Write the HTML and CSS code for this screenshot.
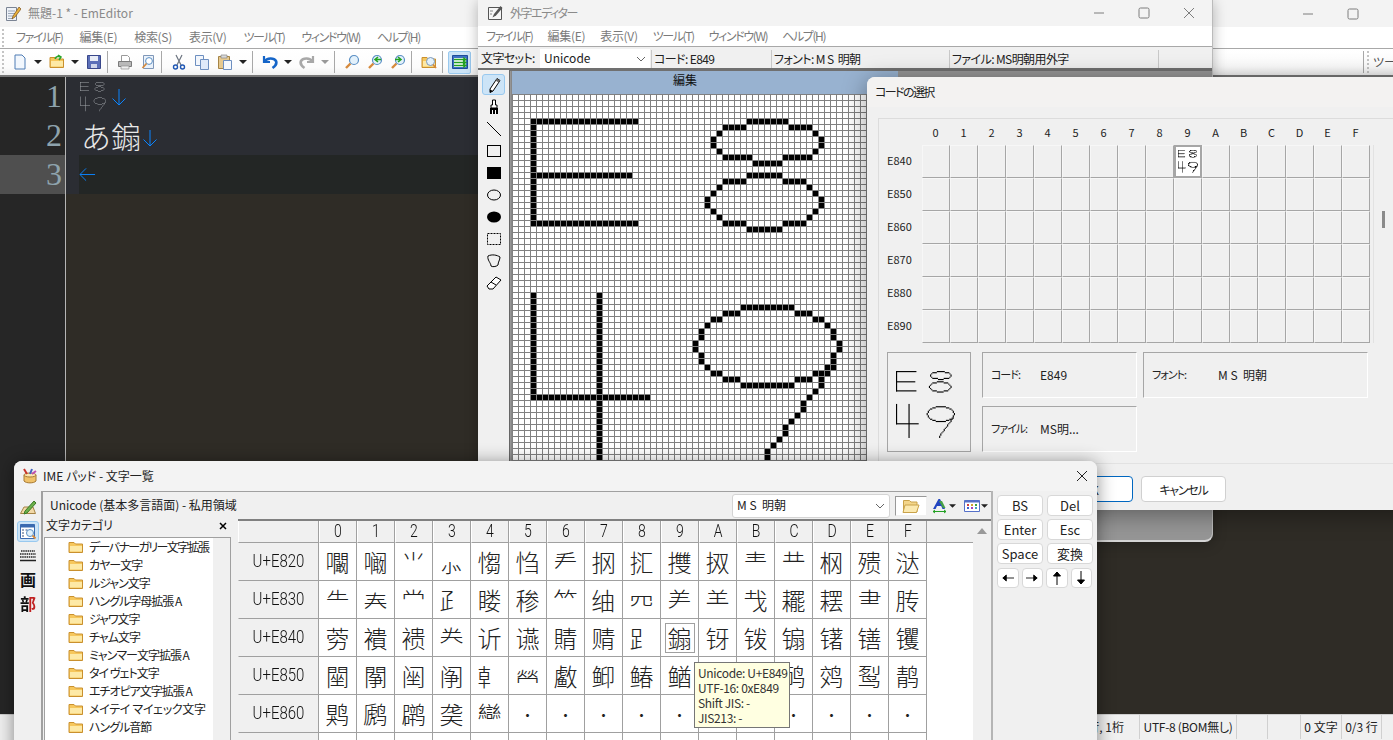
FILE: index.html
```html
<!DOCTYPE html>
<html lang="ja">
<head>
<meta charset="utf-8">
<title>EmEditor / 外字エディター / IME パッド</title>
<link rel="stylesheet" href="styles.css">
</head>
<body>
<svg class="defs" aria-hidden="true">
  <symbol id="g" viewBox="0 0 52 59">
    <rect x="0" y="0" width="18" height="1"/><rect x="0" y="0" width="1" height="18"/><rect x="0" y="9" width="17" height="1"/><rect x="0" y="17" width="18" height="1"/>
    <rect x="36" y="0" width="7" height="1"/><rect x="32" y="1" width="4" height="1"/><rect x="43" y="1" width="4" height="1"/><rect x="31" y="2" width="1" height="1"/><rect x="47" y="2" width="1" height="1"/><rect x="30" y="3" width="1" height="2"/><rect x="48" y="3" width="1" height="2"/><rect x="31" y="5" width="1" height="1"/><rect x="47" y="5" width="1" height="1"/><rect x="32" y="6" width="5" height="1"/><rect x="42" y="6" width="5" height="1"/><rect x="37" y="7" width="5" height="1"/><rect x="36" y="9" width="6" height="1"/><rect x="32" y="10" width="4" height="1"/><rect x="42" y="10" width="4" height="1"/><rect x="31" y="11" width="1" height="1"/><rect x="46" y="11" width="1" height="1"/><rect x="30" y="12" width="1" height="1"/><rect x="47" y="12" width="1" height="1"/><rect x="29" y="13" width="1" height="2"/><rect x="48" y="13" width="1" height="2"/><rect x="30" y="15" width="1" height="1"/><rect x="47" y="15" width="1" height="1"/><rect x="31" y="16" width="1" height="1"/><rect x="46" y="16" width="1" height="1"/><rect x="32" y="17" width="4" height="1"/><rect x="42" y="17" width="4" height="1"/><rect x="36" y="18" width="6" height="1"/>
    <rect x="0" y="29" width="1" height="18"/><rect x="0" y="46" width="20" height="1"/><rect x="11" y="29" width="1" height="30"/>
    <rect x="35" y="31" width="9" height="1"/><rect x="32" y="32" width="3" height="1"/><rect x="44" y="32" width="3" height="1"/><rect x="30" y="33" width="2" height="1"/><rect x="47" y="33" width="2" height="1"/><rect x="29" y="34" width="1" height="1"/><rect x="49" y="34" width="1" height="1"/><rect x="28" y="35" width="1" height="2"/><rect x="50" y="35" width="1" height="2"/><rect x="27" y="37" width="1" height="2"/><rect x="51" y="37" width="1" height="2"/><rect x="28" y="39" width="1" height="2"/><rect x="50" y="39" width="1" height="2"/><rect x="29" y="41" width="1" height="1"/><rect x="49" y="41" width="2" height="1"/><rect x="30" y="42" width="2" height="1"/><rect x="47" y="42" width="3" height="1"/><rect x="32" y="43" width="3" height="1"/><rect x="44" y="43" width="3" height="1"/><rect x="48" y="43" width="1" height="2"/><rect x="35" y="44" width="9" height="1"/><rect x="47" y="45" width="1" height="1"/><rect x="46" y="46" width="1" height="1"/><rect x="45" y="47" width="1" height="2"/><rect x="44" y="49" width="1" height="1"/><rect x="43" y="50" width="1" height="1"/><rect x="42" y="51" width="1" height="2"/><rect x="41" y="53" width="1" height="1"/><rect x="40" y="54" width="1" height="1"/><rect x="39" y="55" width="1" height="2"/><rect x="38" y="57" width="1" height="2"/>
  </symbol>
  <symbol id="caret" viewBox="0 0 8 4"><path d="M0 0h8L4 4z"/></symbol>
  <symbol id="folder" viewBox="0 0 16 16"><path d="M1 3.500h5l1.500 1.500h7v8.500H1z" fill="#f6c75c" stroke="#c9902e"/><path d="M2 7h12v5.500H2z" fill="#fde9a6"/></symbol>
  <symbol id="lens" viewBox="0 0 16 16"><path d="M6.500 9.500 2 14" stroke="#d68a3c" stroke-width="2.400" fill="none"/><circle cx="10" cy="6" r="4.500" fill="#e3f1fb" stroke="#5a8fc4" stroke-width="1.200"/></symbol>
  <symbol id="lensg" viewBox="0 0 16 16"><path d="M6.500 9.500 2 14" stroke="#d68a3c" stroke-width="2.400" fill="none"/><circle cx="10" cy="6" r="4.500" fill="#e3f1fb" stroke="#5a8fc4" stroke-width="1.200"/><path d="M5 5.500h6M8 3l3 2.500L8 8" stroke="#23a323" stroke-width="1.600" fill="none"/></symbol>
  <symbol id="lensb" viewBox="0 0 16 16"><path d="M6.500 9.500 2 14" stroke="#d68a3c" stroke-width="2.400" fill="none"/><circle cx="10" cy="6" r="4.500" fill="#e3f1fb" stroke="#5a8fc4" stroke-width="1.200"/><path d="M14 5.500H8M11 3 8 5.500 11 8" stroke="#23a323" stroke-width="1.600" fill="none"/></symbol>
</svg>

<section class="win em">
  <header class="em-title">
    <svg class="ic16" viewBox="0 0 16 16"><path d="M1.500 1.500h10v13h-10z" fill="#eef2f8" stroke="#7b8494"/><path d="M3 5h7M3 7.500h7M3 10h6M3 12.500h5" stroke="#9aa6b8"/><path d="M14 1 8 10l-1 3 3-2 6-8z" fill="#e9b23c" stroke="#7a4f1c" stroke-width=".7"/></svg>
    <span>無題-1 * - EmEditor</span>
    <div class="ctl em-ctl">
      <svg viewBox="0 0 12 12"><path d="M1 6h10"/></svg>
      <svg viewBox="0 0 12 12"><rect x="1" y="1" width="10" height="10" rx="1.500"/></svg>
      <svg viewBox="0 0 12 12"><path d="M1 1l10 10M11 1 1 11"/></svg>
    </div>
  </header>
  <nav class="em-menu">
    <i class="grip"></i>
    <span class="k">ファイル(F)</span><span>編集(E)</span><span>検索(S)</span><span>表示(V)</span><span class="k">ツール(T)</span><span class="k">ウィンドウ(W)</span><span class="k">ヘルプ(H)</span>
  </nav>
  <div class="em-tools">
    <i class="grip"></i>
    <b class="ti"><svg class="ic16" viewBox="0 0 16 16"><path d="M3 1h7l3 3v11H3z" fill="#f2f7fd" stroke="#4f7db5"/></svg></b><b class="dd"><svg><use href="#caret"/></svg></b>
    <b class="ti"><svg class="ic16" viewBox="0 0 16 16"><use href="#folder"/><path d="M6 5c1-3 4-3 5-2M9 1l3 2-2 3" stroke="#2aa52a" stroke-width="1.500" fill="none"/></svg></b><b class="dd"><svg><use href="#caret"/></svg></b>
    <b class="ti"><svg class="ic16" viewBox="0 0 16 16"><path d="M1.500 1.500h13v13h-13z" fill="#5b6fb8" stroke="#39478a"/><path d="M4 2h8v5H4z" fill="#e8ecf6"/><path d="M5 10h6v4H5z" fill="#cfd6ea"/></svg></b>
    <i class="sep"></i>
    <b class="ti"><svg class="ic16" viewBox="0 0 16 16"><path d="M4.500 1.500h6l2 2v4h-8z" fill="#fff" stroke="#9a9a9a"/><path d="M1.500 7.500h13v5h-13z" fill="#b9b9b9" stroke="#7c7c7c"/><path d="M4 12h8v3H4z" fill="#efefef" stroke="#8f8f8f" stroke-width=".7"/></svg></b>
    <b class="ti"><svg class="ic16" viewBox="0 0 16 16"><path d="M3.500 1.500h10v13h-10z" fill="#eaf2fb" stroke="#7f97b8"/><circle cx="9" cy="7" r="3.400" fill="#fff" stroke="#5a8fc4"/><path d="M6.500 9.500 2.500 14" stroke="#d68a3c" stroke-width="1.800"/></svg></b>
    <i class="sep"></i>
    <b class="ti"><svg class="ic16" viewBox="0 0 16 16"><path d="M5 1l5 10M11 1 6 11" stroke="#6d7480" stroke-width="1.200"/><circle cx="4.500" cy="13" r="2" fill="none" stroke="#1e56b3" stroke-width="1.400"/><circle cx="11.500" cy="13" r="2" fill="none" stroke="#1e56b3" stroke-width="1.400"/></svg></b>
    <b class="ti"><svg class="ic16" viewBox="0 0 16 16"><path d="M1.500 1.500h8v10h-8z" fill="#f2f6fc" stroke="#6d8fc0"/><path d="M6.500 5.500h8v10h-8z" fill="#dfeafa" stroke="#6d8fc0"/></svg></b>
    <b class="ti"><svg class="ic16" viewBox="0 0 16 16"><path d="M1.500 2.500h11v12h-11z" fill="#e6c98f" stroke="#a58446"/><path d="M4 1h6v3H4z" fill="#d9d9d9" stroke="#888" stroke-width=".7"/><path d="M6.500 6.500h8v9h-8z" fill="#f4f8fd" stroke="#6d8fc0"/></svg></b><b class="dd"><svg><use href="#caret"/></svg></b>
    <i class="sep"></i>
    <b class="ti"><svg class="ic16" viewBox="0 0 16 16"><path d="M2 2v6h6" fill="none" stroke="#1565c8" stroke-width="2.200"/><path d="M2.500 7.500C5 3.500 12 3.500 14 7c1 2.500-.5 5-3.500 7" fill="none" stroke="#1565c8" stroke-width="2.600"/></svg></b><b class="dd"><svg><use href="#caret"/></svg></b>
    <b class="ti"><svg class="ic16" viewBox="0 0 16 16"><path d="M14 2v6H8" fill="none" stroke="#a8a8a8" stroke-width="2.200"/><path d="M13.500 7.500C11 3.500 4 3.500 2 7c-1 2.500.5 5 3.500 7" fill="none" stroke="#a8a8a8" stroke-width="2.600"/></svg></b><b class="dd dim"><svg><use href="#caret"/></svg></b>
    <i class="sep"></i>
    <b class="ti"><svg class="ic16"><use href="#lens"/></svg></b>
    <b class="ti"><svg class="ic16"><use href="#lensb"/></svg></b>
    <b class="ti"><svg class="ic16"><use href="#lensg"/></svg></b>
    <i class="sep"></i>
    <b class="ti"><svg class="ic16" viewBox="0 0 16 16"><use href="#folder"/><circle cx="9.500" cy="7.500" r="4" fill="#e3f1fb" stroke="#7c98b8"/><path d="M12 10.500l3 3.500" stroke="#d68a3c" stroke-width="1.800"/></svg></b>
    <i class="sep"></i>
    <b class="ti act"><svg class="ic16" viewBox="0 0 16 16"><path d="M.5 1.500h15v13H.5z" fill="#3c70c4" stroke="#1f4c9a"/><path d="M2 4h12v9H2z" fill="#fff"/><path d="M2 5.500h11M2 8.500h11M2 11.500h11M11 3.500l3 2-3 2M11 6.500l3 2-3 2M11 9.500l3 2-3 2" stroke="#22a022" stroke-width="1.300" fill="none"/></svg></b>
    <div class="tb-right"><i class="sep"></i><i class="grip"></i><span>ツール</span></div>
  </div>
  <div class="editor">
    <div class="gutter">
      <div class="ln">1</div>
      <div class="ln">2</div>
      <div class="ln cur">3</div>
    </div>
    <div class="etext">
      <div class="eline">
        <svg class="gly-s"><use href="#g"/></svg>
        <svg class="arr" viewBox="0 0 16 18"><path d="M8 1v16M1.500 10.500 8 17l6.500-6.500"/></svg>
      </div>
      <div class="eline big">
        <span>あ䥇</span>
        <svg class="arr" viewBox="0 0 16 18"><path d="M8 1v16M1.500 10.500 8 17l6.500-6.500"/></svg>
      </div>
      <div class="eline current">
        <div class="curbg"><svg class="arr" viewBox="0 0 18 16"><path d="M17 8H1M7.500 1.500 1 8l6.500 6.500"/></svg></div>
      </div>
    </div>
  </div>
  <footer class="status">
    <div class="st first">3 行, 1桁</div>
    <div class="st w97">UTF-8 (BOM無し)</div>
    <div class="st w31"></div>
    <div class="st w33"></div>
    <div class="st w41">0 文字</div>
    <div class="st w40">0/3 行</div>
  </footer>
</section>

<section class="win gaiji">
  <header class="gj-title">
    <svg class="ic16" viewBox="0 0 16 16"><path d="M1.500 2.500h13v12h-13z" fill="#f6f6f6" stroke="#555"/><path d="M13.500 1 7 9l-1.500 3.500L9 10.500 15.500 3z" fill="#555"/><path d="M3 6h3M3 9h2" stroke="#888"/></svg>
    <span>外字エディター</span>
    <div class="ctl gj-ctl">
      <svg viewBox="0 0 12 12"><path d="M1 6h10"/></svg>
      <svg viewBox="0 0 12 12"><rect x="1" y="1" width="10" height="10" rx="1.500"/></svg>
      <svg viewBox="0 0 12 12"><path d="M1 1l10 10M11 1 1 11"/></svg>
    </div>
  </header>
  <nav class="gj-menu">
    <span class="k">ファイル(F)</span><span>編集(E)</span><span>表示(V)</span><span class="k">ツール(T)</span><span class="k">ウィンドウ(W)</span><span class="k">ヘルプ(H)</span>
  </nav>
  <div class="gj-bar">
    <label>文字セット:</label>
    <div class="gj-combo"><span>Unicode</span><svg viewBox="0 0 10 6"><path d="M1 1l4 4 4-4"/></svg></div>
    <div class="gj-st w122">コード: E849</div>
    <div class="gj-st w178">フォント: M S&nbsp; 明朝</div>
    <div class="gj-st w210">ファイル: MS明朝用外字</div>
  </div>
  <div class="gj-body">
    <aside class="tools">
      <b class="tool on"><svg class="ic16" viewBox="0 0 16 16"><path d="M11 1.500l3 2L7 14l-3 1.500L4 12z" fill="#fff" stroke="#000"/><path d="M11 1.500l3 2-1.500 2-3-2z" fill="#666"/><path d="M4 12.500l3 1.500-3 1.500z" fill="#000"/></svg></b>
      <b class="tool"><svg class="ic16" viewBox="0 0 16 16"><path d="M6.500 1h3v5h1.500v3H5V6h1.500z" fill="#fff" stroke="#000"/><path d="M4 9h8v6H4z" fill="#000"/><path d="M6.500 11v4M9.500 11v4" stroke="#fff"/></svg></b>
      <b class="tool"><svg class="ic16" viewBox="0 0 16 16"><path d="M1 1l14 14" stroke="#000"/></svg></b>
      <b class="tool"><svg class="ic16" viewBox="0 0 16 16"><rect x="1.500" y="2.500" width="13" height="11" fill="none" stroke="#000"/></svg></b>
      <b class="tool"><svg class="ic16" viewBox="0 0 16 16"><rect x="1" y="2" width="14" height="12"/></svg></b>
      <b class="tool"><svg class="ic16" viewBox="0 0 16 16"><ellipse cx="8" cy="8" rx="6.500" ry="5" fill="none" stroke="#000"/></svg></b>
      <b class="tool"><svg class="ic16" viewBox="0 0 16 16"><ellipse cx="8" cy="8" rx="7" ry="5.500"/></svg></b>
      <b class="tool"><svg class="ic16" viewBox="0 0 16 16"><rect x="1.500" y="2.500" width="13" height="11" fill="none" stroke="#000" stroke-dasharray="2 1"/></svg></b>
      <b class="tool"><svg class="ic16" viewBox="0 0 16 16"><path d="M2 3c4-2 9-1 12 1 0 3-2 5-2 8-2 2-6 2-7 1 0-3-4-6-3-10z" fill="none" stroke="#000"/></svg></b>
      <b class="tool"><svg class="ic16" viewBox="0 0 16 16"><path d="M10 2l5 3-8 9H3l-2-3z" fill="#fff" stroke="#000"/><path d="M5 7l5 3" stroke="#000"/></svg></b>
    </aside>
    <div class="mdi">
      <div class="child">
        <div class="child-title">編集</div>
        <div class="grid64"><svg class="gly-e"><use href="#g"/></svg></div>
      </div>
    </div>
  </div>
</section>

<section class="win dialog">
  <header class="dl-title"><span>コードの選択</span><svg class="dl-x" viewBox="0 0 12 12"><path d="M1 1l10 10M11 1 1 11"/></svg></header>
  <div class="group">
    <div class="code-wrap">
      <div class="codes">
        <i></i><em>0</em><em>1</em><em>2</em><em>3</em><em>4</em><em>5</em><em>6</em><em>7</em><em>8</em><em>9</em><em>A</em><em>B</em><em>C</em><em>D</em><em>E</em><em>F</em>
        <strong>E840</strong><u></u><u></u><u></u><u></u><u></u><u></u><u></u><u></u><u></u><u class="sel"><svg class="gly-c"><use href="#g"/></svg></u><u></u><u></u><u></u><u></u><u></u><u></u>
        <strong>E850</strong><u></u><u></u><u></u><u></u><u></u><u></u><u></u><u></u><u></u><u></u><u></u><u></u><u></u><u></u><u></u><u></u>
        <strong>E860</strong><u></u><u></u><u></u><u></u><u></u><u></u><u></u><u></u><u></u><u></u><u></u><u></u><u></u><u></u><u></u><u></u>
        <strong>E870</strong><u></u><u></u><u></u><u></u><u></u><u></u><u></u><u></u><u></u><u></u><u></u><u></u><u></u><u></u><u></u><u></u>
        <strong>E880</strong><u></u><u></u><u></u><u></u><u></u><u></u><u></u><u></u><u></u><u></u><u></u><u></u><u></u><u></u><u></u><u></u>
        <strong>E890</strong><u></u><u></u><u></u><u></u><u></u><u></u><u></u><u></u><u></u><u></u><u></u><u></u><u></u><u></u><u></u><u></u>
      </div>
      <div class="code-scroll"><i></i></div>
    </div>
    <div class="detail">
      <div class="preview"><svg class="gly-p"><use href="#g"/></svg></div>
      <div class="info">
        <div class="ibox w155"><span>コード:</span><span>E849</span></div>
        <div class="ibox w225"><span>フォント:</span><span>M S&nbsp; 明朝</span></div>
        <div class="ibox w155"><span>ファイル:</span><span>MS明...</span></div>
      </div>
    </div>
  </div>
  <footer class="dl-foot">
    <button class="btn def">OK</button>
    <button class="btn">キャンセル</button>
  </footer>
</section>

<section class="win ime">
  <header class="ime-title">
    <svg class="ic16" viewBox="0 0 16 16"><path d="M2 7h12v6c-2 2.500-10 2.500-12 0z" fill="#f0c26a" stroke="#a87a34"/><ellipse cx="8" cy="7" rx="6" ry="2" fill="#fbe6b0" stroke="#a87a34"/><path d="M5 6 2 1" stroke="#c9342b" stroke-width="2"/><path d="M8 6l2-5" stroke="#4464c0" stroke-width="2"/><path d="M10 6l4-3" stroke="#c050b0" stroke-width="2"/></svg>
    <span>IME パッド - 文字一覧</span>
    <svg class="ime-x" viewBox="0 0 12 12"><path d="M1 1l10 10M11 1 1 11"/></svg>
  </header>
  <div class="ime-body">
    <aside class="ime-side">
      <b class="sb"><svg viewBox="0 0 18 18"><path d="M1.500 14.500 5 8h9l2.500 6.500z" fill="#f2d9a8" stroke="#a58446"/><path d="M6 12 15 2l2 2-9 10-3 1z" fill="#6cb04a" stroke="#3c7a28"/></svg></b>
      <b class="sb on"><svg viewBox="0 0 18 18"><path d="M1.500 1.500h14v14h-14z" fill="#fff" stroke="#3a6ab0"/><path d="M1.500 1.500h14v3h-14z" fill="#3a6ab0"/><path d="M3 7h2M3 10h2M3 13h2M6.500 7h2" stroke="#7a8aa8" stroke-width="1.500"/><circle cx="11" cy="10" r="3.500" fill="#dff0fb" stroke="#5a8fc4"/><path d="M13.500 12.500l3 3" stroke="#d68a3c" stroke-width="1.800"/></svg></b>
      <b class="sb"><svg viewBox="0 0 18 18"><path d="M2 4h14M1 7h16M1 10h16" stroke="#222" stroke-width="1.300" stroke-dasharray="1.500 .7"/><path d="M1 13.500h16" stroke="#222" stroke-width="1.500"/></svg></b>
      <b class="sb glyph">画</b>
      <b class="sb glyph bu">部</b>
    </aside>
    <div class="ime-main">
      <div class="ime-head">
        <span class="ime-cat">Unicode (基本多言語面) - 私用領域</span>
        <div class="ime-combo"><span>M S&nbsp; 明朝</span><svg viewBox="0 0 10 6"><path d="M1 1l4 4 4-4"/></svg></div>
        <div class="fbtn"><svg class="ic16w" viewBox="0 0 18 16"><path d="M1.500 2.500h6l1.500 1.500h6v10h-13.500z" fill="#f3d58a" stroke="#c9a24a"/><path d="M3 7h14l-2.500 7.500H1z" fill="#fbe9b0" stroke="#c9a24a"/></svg></div>
        <b class="hic wa"><svg class="ic16" viewBox="0 0 16 16"><path d="M1 11 6.500 1h1.500L13 11h-2.500L9.200 8H5L3.600 11z" fill="#2244c0"/><path d="M7 3l4 7h2.500L10 3z" fill="#46a046"/><path d="M1 13.500h13M1 13.500l2-1.500M1 13.500l2 1.500M14 13.500l-2-1.500M14 13.500l-2 1.500" stroke="#22a022"/></svg><svg class="cr"><use href="#caret"/></svg></b>
        <b class="hic wb"><svg class="ic16" viewBox="0 0 16 16"><path d="M.5 2.500h15v11H.5z" fill="#fff" stroke="#5570c8"/><path d="M.5 2.500h15v2h-15z" fill="#5570c8"/><path d="M3 7h2" stroke="#d04040" stroke-width="2"/><path d="M7 7h2" stroke="#d0a030" stroke-width="2"/><path d="M11 7h2" stroke="#40a040" stroke-width="2"/><path d="M3 10h2" stroke="#4060d0" stroke-width="2"/><path d="M7 10h2" stroke="#a040c0" stroke-width="2"/><path d="M11 10h2" stroke="#40a0c0" stroke-width="2"/></svg><svg class="cr"><use href="#caret"/></svg></b>
      </div>
      <div class="ime-panes">
        <div class="tree">
          <div class="tree-head"><span>文字カテゴリ</span><svg viewBox="0 0 8 8"><path d="M1 1l6 6M7 1 1 7"/></svg></div>
          <div class="tree-body">
            <ul>
              <li class="tight"><svg><use href="#folder"/></svg><span>デーバナーガリー文字拡張</span></li>
              <li><svg><use href="#folder"/></svg><span>カヤー文字</span></li>
              <li><svg><use href="#folder"/></svg><span>ルジャン文字</span></li>
              <li><svg><use href="#folder"/></svg><span>ハングル字母拡張 A</span></li>
              <li><svg><use href="#folder"/></svg><span>ジャワ文字</span></li>
              <li><svg><use href="#folder"/></svg><span>チャム文字</span></li>
              <li><svg><use href="#folder"/></svg><span>ミャンマー文字拡張 A</span></li>
              <li><svg><use href="#folder"/></svg><span>タイ ヴェト文字</span></li>
              <li><svg><use href="#folder"/></svg><span>エチオピア文字拡張 A</span></li>
              <li class="loose"><svg><use href="#folder"/></svg><span>メイテイ マイェック文字</span></li>
              <li><svg><use href="#folder"/></svg><span>ハングル音節</span></li>
              <li><svg><use href="#folder"/></svg></li>
            </ul>
            <div class="tree-scroll"></div>
          </div>
        </div>
        <div class="chars-wrap">
          <div class="chars">
            <i></i><em><span>0</span></em><em><span>1</span></em><em><span>2</span></em><em><span>3</span></em><em><span>4</span></em><em><span>5</span></em><em><span>6</span></em><em><span>7</span></em><em><span>8</span></em><em><span>9</span></em><em><span>A</span></em><em><span>B</span></em><em><span>C</span></em><em><span>D</span></em><em><span>E</span></em><em><span>F</span></em>
            <strong><span>U+E820</span></strong><u>㘚</u><u>㘎</u><u>⺌</u><u>⺗</u><u>㥮</u><u>㤘</u><u>龵</u><u>㧏</u><u>㧟</u><u>㩳</u><u>㧐</u><u>龶</u><u>龷</u><u>㭎</u><u>㱮</u><u>㳠</u>
            <strong><span>U+E830</span></strong><u>⺧</u><u>𡗗</u><u>龸</u><u>⺪</u><u>䁖</u><u>䅟</u><u>⺮</u><u>䌷</u><u>⺳</u><u>⺶</u><u>⺷</u><u>𢦏</u><u>䎱</u><u>䎬</u><u>⺻</u><u>䏝</u>
            <strong><span>U+E840</span></strong><u>䓖</u><u>䙡</u><u>䙌</u><u>龹</u><u>䜣</u><u>䜩</u><u>䝼</u><u>䞍</u><u>⻊</u><u class="focus"><span>䥇</span></u><u>䥺</u><u>䥽</u><u>䦂</u><u>䦃</u><u>䦅</u><u>䦆</u>
            <strong><span>U+E850</span></strong><u>䦟</u><u>䦛</u><u>䦷</u><u>䦶</u><u>龺</u><u>𤇾</u><u>䲣</u><u>䲟</u><u>䲠</u><u>䲡</u><u>䱷</u><u>䲢</u><u>䴓</u><u>䴔</u><u>䴕</u><u>䴖</u>
            <strong><span>U+E860</span></strong><u>䴗</u><u>䴘</u><u>䴙</u><u>䶮</u><u>龻</u><u class="dot">•</u><u class="dot">•</u><u class="dot">•</u><u class="dot">•</u><u class="dot">•</u><u class="dot">•</u><u class="dot">•</u><u class="dot">•</u><u class="dot">•</u><u class="dot">•</u><u class="dot">•</u>
            <strong></strong><u></u><u></u><u></u><u></u><u></u><u></u><u></u><u></u><u></u><u></u><u></u><u></u><u></u><u></u><u></u><u></u>
          </div>
          <div class="chars-fill"><i></i></div>
          <div class="chars-scroll"><svg viewBox="0 0 10 6"><path d="M5 0l5 6H0z"/></svg></div>
        </div>
      </div>
    </div>
    <aside class="keys">
      <button class="key">BS</button><button class="key">Del</button>
      <button class="key">Enter</button><button class="key">Esc</button>
      <button class="key">Space</button><button class="key">変換</button>
      <div class="arrows">
        <button class="key"><svg viewBox="0 0 14 10"><path d="M14 5H1M5 1.500 1 5l4 3.500z"/></svg></button>
        <button class="key"><svg viewBox="0 0 14 10"><path d="M0 5h13M9 1.500 13 5 9 8.500z"/></svg></button>
        <button class="key"><svg viewBox="0 0 10 14"><path d="M5 14V1M1.500 5 5 1l3.500 4z"/></svg></button>
        <button class="key"><svg viewBox="0 0 10 14"><path d="M5 0v13M1.500 9 5 13l3.500-4z"/></svg></button>
      </div>
    </aside>
  </div>
  <div class="tip">Unicode: U+E849<br>UTF-16: 0xE849<br>Shift JIS: -<br>JIS213: -</div>
</section>
</body>
</html>
```
FILE: styles.css
```css
* { box-sizing: border-box; }
html, body { margin: 0; padding: 0; height: 740px; overflow: hidden; }
body {
  position: relative;
  width: 1393px;
  background: #2f2c26;
  font: 12px/1.2 "Noto Sans CJK JP", "Noto Sans", sans-serif;
  font-feature-settings: "palt";
  color: #222;
}
i, b, em, u, strong { font-style: normal; font-weight: 400; text-decoration: none; display: block; }
.defs { position: absolute; width: 0; height: 0; }
.win { position: absolute; }
.ic16 { width: 16px; height: 16px; display: block; flex: none; }
.k { letter-spacing: -1.4px; }

.ctl { margin-left: auto; display: flex; }
.ctl svg { width: 12px; height: 12px; fill: none; stroke: #7d7d7d; stroke-width: 1; flex: none; }

/* EmEditor */
.em { left: 0; top: 0; width: 1393px; height: 740px; display: flex; flex-direction: column; }
.em-title { height: 27px; background: #f3f3f3; display: flex; align-items: center; padding-left: 5px; font-size: 12px; color: #8a8a8a; gap: 7px; flex: none; }
.em-ctl { gap: 33px; margin-right: -11px; }
.em-menu { height: 22px; flex: none; background: #fff; border-bottom: 1px solid #a8a8a8; display: flex; align-items: center; gap: 17px; padding-left: 0; color: #7a7a7a; letter-spacing: -.3px; }
.em-menu .k { letter-spacing: -1.4px; }
.em-menu .grip { margin: 0 -5px 0 2px; height: 18px; }
.grip { width: 2px; height: 22px; margin: 0 4px 0 2px; border-left: 2px dotted #c4c4c4; flex: none; }
.em-tools { height: 28px; flex: none; background: linear-gradient(#fff, #fcfcfc 70%, #f0f0f0); border-bottom: 2px solid #777; display: flex; align-items: center; }
.ti { width: 23px; height: 23px; display: flex; align-items: center; justify-content: center; flex: none; }
.dd { width: 14px; display: flex; justify-content: center; flex: none; }
.dd svg { width: 8px; height: 4px; fill: #222; display: block; }
.dd.dim svg { fill: #999; }
.sep { width: 1px; height: 22px; margin: 0 5px 0 2px; background: #a8a8a8; flex: none; }
.act { background: #cce4f7; border: 1px solid #99c9ef; border-radius: 2px; }
.tb-right { margin-left: auto; width: 30px; display: flex; align-items: center; flex: none; overflow: hidden; white-space: nowrap; color: #555; }
.tb-right .sep { margin: 0 3px 0 0; }
.tb-right .grip { margin: 0 4px 0 0; }

.editor { flex: 1; display: flex; min-height: 0; background: #2f2c26; }
.gutter { width: 66px; background: #262626; border-right: 1px solid #b5b5b5; flex: none; }
.ln { height: 39px; text-align: right; padding-right: 3px; font: 32px/39px "Liberation Serif", serif; color: #8ea3ad; }
.ln.cur { background: #4f4f4f; }
.etext { flex: 1; }
.eline { height: 39px; background: #2b2d33; display: flex; align-items: center; padding-left: 14px; }
.gly-s { width: 26px; height: 29.5px; fill: #a4a8ad; margin-top: 1px; flex: none; }
.arr { width: 16px; height: 18px; fill: none; stroke: #0a84ff; stroke-width: 1; flex: none; }
.eline .arr { margin-left: 5px; }
.eline.big { padding-left: 15px; font: 300 30px/39px "Noto Sans CJK SC", sans-serif; color: #e8e8e8; font-feature-settings: normal; }
.eline.big .arr { margin-left: 1px; margin-top: 4px; }
.eline.current { padding-left: 13px; }
.curbg { flex: 1; height: 39px; background: #232625; display: flex; align-items: center; }
.curbg .arr { margin-left: 0; width: 17px; height: 17px; }

.status { height: 26px; flex: none; background: #f0f0f0; border-top: 1px solid #cfcfcf; display: flex; align-items: flex-start; color: #222; }
.st { height: 24px; line-height: 23px; border-right: 1px solid #d0d0d0; white-space: nowrap; text-align: center; flex: none; }
.first { width: 1140px; text-align: right; padding-right: 15px; }
.w97 { width: 97px; letter-spacing: -.3px; }
.w31 { width: 31px; }
.w33 { width: 33px; }
.w41 { width: 41px; }
.w40 { width: 40px; }

/* 外字エディター */
.gaiji { left: 478px; top: 0; width: 735px; height: 542px; background: #f0f0f0; border-radius: 0 0 8px 0; box-shadow: 0 2px 14px rgba(0,0,0,.28); display: flex; flex-direction: column; overflow: hidden; border-bottom: 2px solid #d5d5d5; border-right: 1px solid #bbb; }
.gj-title { height: 26px; flex: none; display: flex; align-items: center; padding-left: 9px; gap: 7px; font-size: 12px; letter-spacing: -1.5px; color: #8a8a8a; background: #f3f3f3; }
.gj-ctl { gap: 33px; padding-right: 17px; }
.gj-menu { height: 21px; flex: none; background: #fff; border-bottom: 1px solid #a8a8a8; display: flex; align-items: center; gap: 15px; padding-left: 8px; color: #7a7a7a; letter-spacing: -.3px; }
.gj-menu .k { letter-spacing: -1.4px; }
.gj-bar { height: 23px; flex: none; display: flex; align-items: center; background: #f0f0f0; border-bottom: 2px solid #707070; padding: 2px 0 0 3px; color: #222; white-space: nowrap; }
.gj-bar label { width: 59px; flex: none; letter-spacing: -.6px; }
.gj-combo { width: 110px; height: 19px; background: #fff; display: flex; align-items: center; justify-content: space-between; padding: 0 4px; flex: none; margin-right: 1px; }
.gj-combo svg, .ime-combo svg { width: 10px; height: 6px; fill: none; stroke: #666; }
.gj-st { height: 18px; line-height: 18px; padding-left: 2px; border-left: 1px solid #c8c8c8; flex: none; letter-spacing: -.6px; }
.w122 { width: 120px; }
.w178 { width: 178px; }
.w210 { width: 210px; border-right: 1px solid #c8c8c8; }
.gj-body { flex: 1; display: flex; min-height: 0; }
.tools { width: 31px; flex: none; padding: 4px 0 0 4px; display: flex; flex-direction: column; gap: 1px; background: #f0f0f0; }
.tool { width: 23px; height: 21px; display: flex; align-items: center; justify-content: center; border: 1px solid transparent; flex: none; }
.tool.on { background: #cce4f7; border-color: #99c9ef; border-radius: 3px; }
.mdi { flex: 1; background: #969696; padding: 0 0 0 1px; border-left: 1px solid #666; border-top: 1px solid #707070; }
.child { width: 387px; height: 100%; border-left: 1px solid #888; display: flex; flex-direction: column; }
.child-title { height: 23px; flex: none; background: #98b2d0; text-align: center; color: #111; line-height: 17px; padding-right: 40px; }
.grid64 { flex: 1; position: relative; background: #fff; padding: 25px 0 0 19px; overflow: hidden; }
.grid64::after { content: ""; position: absolute; inset: 0; background-image: linear-gradient(90deg, #808080 1px, transparent 1px), linear-gradient(#808080 1px, transparent 1px); background-size: 6px 6px; }
.gly-e { width: 312px; height: 354px; fill: #000; display: block; }

/* コードの選択 */
.dialog { left: 867px; top: 77px; width: 560px; height: 433px; background: #f0f0f0; border-radius: 8px 0 0 0; box-shadow: 0 4px 24px rgba(0,0,0,.4); display: flex; flex-direction: column; }
.dl-title { height: 30px; flex: none; background: #f3f2f1; border-radius: 8px 0 0 0; display: flex; align-items: center; padding-left: 8px; color: #222; letter-spacing: -1.6px; }
.dl-x { width: 12px; height: 12px; margin-left: 458px; fill: none; stroke: #333; flex: none; }
.group { flex: 1; margin: 11px 0 0 11px; border: 1px solid #dcdcdc; border-bottom: 0; border-right: 0; min-height: 0; }
.code-wrap { display: flex; }
.codes { display: grid; grid-template-columns: 43px repeat(16, 28px); grid-template-rows: 26px repeat(6, 33px); flex: none; }
.codes em { text-align: center; line-height: 26px; padding-right: 1px; font-size: 11px; color: #222; }
.codes strong { font-size: 11px; line-height: 31px; padding-left: 8px; color: #222; font-weight: 400; }
.codes u { border: 1px solid; border-color: #f7f7f7 #a6a6a6 #a6a6a6 #f7f7f7; }
.codes u.sel { background: #fff; border: 2px solid #a6a6a6; display: flex; align-items: center; justify-content: center; }
.gly-c { width: 20px; height: 23px; fill: #000; stroke: #000; stroke-width: .6; }
.code-scroll { width: 16px; margin-left: 3px; border-left: 1px solid #e2e2e2; padding: 66px 0 0 8px; margin-top: 26px; height: 198px; }
.code-scroll i { width: 3px; height: 17px; background: #8a8a8a; }
.detail { display: flex; gap: 11px; padding: 9px 0 0 8px; }
.preview { width: 84px; height: 100px; border: 1px solid #a6a6a6; padding: 18px 0 0 8px; flex: none; }
.gly-p { width: 59px; height: 67px; fill: #000; display: block; }
.info { display: grid; grid-template-columns: 155px 225px; grid-auto-rows: 46px; gap: 8px 6px; flex: none; }
.ibox { border: 1px solid; border-color: #a6a6a6 #fff #fff #a6a6a6; display: flex; align-items: center; padding-left: 8px; color: #222; }
.ibox span:first-child { width: 49px; flex: none; font-size: 11px; letter-spacing: -1px; }
.ibox.w225 span:first-child { width: 66px; }
.dl-foot { height: 47px; flex: none; border-top: 1px solid #e2e2e2; display: flex; align-items: flex-start; padding: 12px 0 0 181px; gap: 8px; }
.btn { width: 85px; height: 26px; background: #fff; border: 1px solid #d0d0d0; border-radius: 4px; font: 12px "Noto Sans CJK JP", sans-serif; font-feature-settings: "palt"; letter-spacing: -1.2px; color: #222; padding: 0; }
.btn.def { border-color: #0067c0; }

/* IME */
.ime { left: 14px; top: 461px; width: 1083px; height: 300px; background: #f0f0f0; border-radius: 8px 8px 0 0; box-shadow: 0 2px 18px rgba(0,0,0,.45); display: flex; flex-direction: column; }
.ime-title { height: 30px; flex: none; display: flex; align-items: center; padding-left: 8px; gap: 5px; color: #222; background: #f3f3f3; border-radius: 8px 8px 0 0; font-size: 12px; }
.ime-x { width: 12px; height: 12px; margin-left: auto; margin-right: 9px; fill: none; stroke: #222; flex: none; }
.ime-body { flex: 1; display: flex; min-height: 0; }
.ime-side { width: 29px; flex: none; border-right: 2px solid #a0a0a0; padding: 6px 0 0 3px; display: flex; flex-direction: column; gap: 3px; }
.sb { width: 22px; height: 21px; display: flex; align-items: center; justify-content: center; flex: none; }
.sb svg { width: 18px; height: 18px; flex: none; }
.sb.on { background: #cce4f7; border: 1px solid #99c9ef; border-radius: 3px; }
.glyph { font: 16px/21px "Noto Sans CJK JP", sans-serif; color: #111; font-weight: 700; }
.bu { background: linear-gradient(90deg, #111 55%, #c02020 55%); -webkit-background-clip: text; background-clip: text; color: transparent; }
.ime-main { width: 948px; flex: none; display: flex; flex-direction: column; border-top: 1px solid #a0a0a0; }
.ime-head { height: 27px; flex: none; display: flex; align-items: center; padding-left: 7px; }
.ime-cat { width: 682px; flex: none; color: #222; white-space: nowrap; }
.ime-combo { width: 158px; height: 24px; background: #fff; border: 1px solid #d4d4d4; border-radius: 3px; display: flex; align-items: center; justify-content: space-between; padding: 0 4px; flex: none; margin-right: 5px; }
.fbtn { width: 32px; height: 20px; background: #fff; border: 1px solid; border-color: #999 #f0f0f0 #f0f0f0 #999; display: flex; align-items: center; justify-content: center; flex: none; }
.ic16w { width: 18px; height: 16px; }
.hic { display: flex; align-items: center; flex: none; }
.hic .cr { width: 7px; height: 4px; fill: #222; margin-left: 1px; }
.wa { margin-left: 5px; width: 32px; }
.wb { width: 24px; }
.ime-panes { flex: 1; display: flex; min-height: 0; gap: 7px; padding-left: 1px; }
.tree { width: 187px; flex: none; display: flex; flex-direction: column; }
.tree-head { height: 18px; flex: none; display: flex; justify-content: space-between; align-items: center; padding: 0 4px 5px 2px; color: #222; }
.tree-head svg { width: 8px; height: 8px; fill: none; stroke: #000; stroke-width: 1.500; }
.tree-body { flex: 1; background: #fff; border: 1px solid #a0a0a0; display: flex; min-height: 0; overflow: hidden; }
.tree-body ul { list-style: none; margin: 0; padding: 0 0 0 23px; flex: 1; min-width: 0; white-space: nowrap; }
.tree-body li { height: 18px; display: flex; align-items: center; gap: 5px; color: #222; letter-spacing: -1px; }
.tree-body li.tight { letter-spacing: -1.6px; }
.tree-body li.loose { letter-spacing: -.3px; }
.tree-body li svg { width: 16px; height: 16px; flex: none; }
.tree-scroll { width: 17px; flex: none; background: #f0f0f0; }
.chars-wrap { flex: 1; display: flex; min-width: 0; border-top: 2px solid #808080; min-height: 0; }
.chars { display: grid; grid-template-columns: 81px repeat(16, 38px); grid-template-rows: 22px repeat(6, 38px); flex: none; background: #fff; }
.chars i, .chars em { background: #f0f0f0; border-right: 1px solid #a0a0a0; border-bottom: 1px solid #a0a0a0; border-left: 1px solid #fff; }
.chars em { text-align: center; font: 300 14px/21px Roboto, sans-serif; color: #111; }
.chars strong { border-right: 1px solid #a0a0a0; border-bottom: 1px solid #a0a0a0; border-left: 1px solid #f0f0f0; background: #f0f0f0; text-align: center; font: 300 15px/37px Roboto, sans-serif; color: #111; }
.chars em span, .chars strong span { display: inline-block; transform: scaleY(1.25); }
.chars u { border-right: 1px solid #a0a0a0; border-bottom: 1px solid #a0a0a0; display: flex; align-items: center; justify-content: center; font: 300 24px/1 "Noto Sans CJK SC", "Noto Sans CJK JP", sans-serif; color: #222; font-feature-settings: normal; overflow: hidden; }
.chars u.dot { font-size: 16px; }
.chars u.focus span { width: 30px; height: 30px; border: 1px solid #a0a0a0; display: flex; align-items: center; justify-content: center; }
.chars-fill { width: 46px; flex: none; background: #fff; }
.chars-fill i { height: 22px; background: #f0f0f0; border-bottom: 1px solid #a0a0a0; }
.chars-scroll { width: 17px; flex: none; background: #f0f0f0; display: flex; justify-content: center; padding-top: 7px; }
.chars-scroll svg { width: 10px; height: 6px; fill: #999; }
.keys { width: 105px; flex: none; border-left: 2px solid #b5b5b5; padding: 4px 0 0 4px; display: grid; grid-template-columns: 46px 46px; grid-auto-rows: 21px; column-gap: 4px; row-gap: 3px; align-content: start; }
.key { background: #fff; border: 1px solid #d8d8d8; border-radius: 4px; font: 13px "Noto Sans CJK JP", sans-serif; color: #222; padding: 0; display: flex; align-items: center; justify-content: center; }
.arrows { grid-column: 1 / 3; display: grid; grid-template-columns: repeat(4, 21.500px); column-gap: 3px; margin-top: 1px; }
.key svg { width: 12px; height: 12px; fill: #000; stroke: #000; }
.arrows .key:nth-child(n+3) svg { width: 10px; height: 14px; }
.tip { position: absolute; left: 680px; top: 201px; width: 96px; height: 66px; background: #ffffe1; border: 1px solid #767676; padding: 2px 0 0 3px; font-size: 12px; line-height: 15px; letter-spacing: -.35px; color: #333; white-space: nowrap; overflow: hidden; }
```
